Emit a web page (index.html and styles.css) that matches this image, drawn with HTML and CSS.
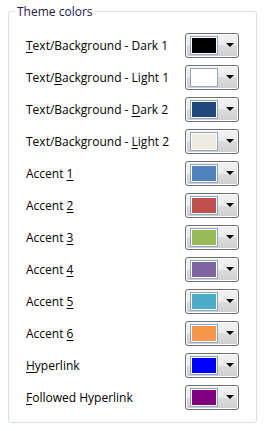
FILE: index.html
```html
<!DOCTYPE html>
<html lang="en">

<head>
    <meta charset="UTF-8">
    <meta name="viewport" content="width=device-width, initial-scale=1.0">
    <title>Theme colors</title>
    <link rel="stylesheet" href="styles.css">
</head>

<body>

    <fieldset class="group">
        <legend>Theme colors</legend>

        <div class="row">
            <span class="name"><u>T</u>ext/Background - Dark 1</span>
            <button class="picker"><span class="swatch"><i style="background:#000000"></i></span><span class="arrow"></span></button>
        </div>
        <div class="row">
            <span class="name">Text/<u>B</u>ackground - Light 1</span>
            <button class="picker"><span class="swatch"><i style="background:#ffffff"></i></span><span class="arrow"></span></button>
        </div>
        <div class="row">
            <span class="name">Text/Background - <u>D</u>ark 2</span>
            <button class="picker"><span class="swatch"><i style="background:#1f497d"></i></span><span class="arrow"></span></button>
        </div>
        <div class="row">
            <span class="name">Text/Background - <u>L</u>ight 2</span>
            <button class="picker"><span class="swatch"><i style="background:#eeece1"></i></span><span class="arrow"></span></button>
        </div>
        <div class="row">
            <span class="name">Accent <u>1</u></span>
            <button class="picker"><span class="swatch"><i style="background:#4f81bd"></i></span><span class="arrow"></span></button>
        </div>
        <div class="row">
            <span class="name">Accent <u>2</u></span>
            <button class="picker"><span class="swatch"><i style="background:#c0504d"></i></span><span class="arrow"></span></button>
        </div>
        <div class="row">
            <span class="name">Accent <u>3</u></span>
            <button class="picker"><span class="swatch"><i style="background:#9bbb59"></i></span><span class="arrow"></span></button>
        </div>
        <div class="row">
            <span class="name">Accent <u>4</u></span>
            <button class="picker"><span class="swatch"><i style="background:#8064a2"></i></span><span class="arrow"></span></button>
        </div>
        <div class="row">
            <span class="name">Accent <u>5</u></span>
            <button class="picker"><span class="swatch"><i style="background:#4bacc6"></i></span><span class="arrow"></span></button>
        </div>
        <div class="row">
            <span class="name">Accent <u>6</u></span>
            <button class="picker"><span class="swatch"><i style="background:#f79646"></i></span><span class="arrow"></span></button>
        </div>
        <div class="row">
            <span class="name"><u>H</u>yperlink</span>
            <button class="picker"><span class="swatch"><i style="background:#0000ff"></i></span><span class="arrow"></span></button>
        </div>
        <div class="row">
            <span class="name"><u>F</u>ollowed Hyperlink</span>
            <button class="picker"><span class="swatch"><i style="background:#800080"></i></span><span class="arrow"></span></button>
        </div>
    </fieldset>

</body>

</html>
```

FILE: styles.css
```css
/* Page */
body {
    margin: 0;
    padding-top: 4px;
    background: #fff;
    font-family: 'Open Sans', sans-serif;
    font-size: 12px;
    color: #000;
}

/* Group box */
.group {
    margin: 0 8px;
    padding: 10px 17px 9px 17px;
    border: 1px solid #d5dfe5;
    border-radius: 3px;
}

.group legend {
    margin-left: -11px;
    padding: 0 2px;
    line-height: 15px;
    color: #1e1a4e;
}

/* Rows */
.row {
    display: flex;
    justify-content: space-between;
    align-items: center;
    height: 32px;
}

.name u {
    text-decoration-thickness: 1px;
    text-underline-offset: 2px;
}

/* Colour picker button */
.picker {
    display: flex;
    align-items: center;
    width: 54px;
    height: 25px;
    margin: 0;
    padding: 0 0 0 4px;
    border: 1px solid #707070;
    border-radius: 3px;
    background: linear-gradient(#f2f2f2 0%, #ebebeb 50%, #dddddd 50%, #cfcfcf 100%);
    box-shadow: inset 0 0 0 1px #fcfcfc;
}

.swatch {
    display: block;
    width: 24px;
    height: 15px;
    padding: 1px;
    border: 1px solid #8da8cc;
    background: #fff;
}

.swatch i {
    display: block;
    width: 100%;
    height: 100%;
}

.arrow {
    width: 0;
    height: 0;
    margin-left: 8px;
    border-left: 4px solid transparent;
    border-right: 4px solid transparent;
    border-top: 4px solid #000;
}
```
